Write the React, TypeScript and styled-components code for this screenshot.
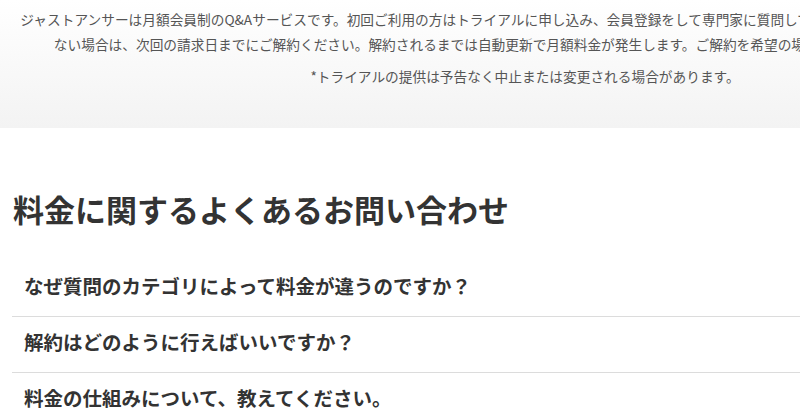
import React from "react";
import styled, { createGlobalStyle } from "styled-components";

const GlobalStyle = createGlobalStyle`
  html, body {
    margin: 0;
    padding: 0;
    background: #fff;
    overflow: hidden;
  }
  body {
    font-family: "Noto Sans CJK JP", "Noto Sans", sans-serif;
    color: #333;
  }
`;

const Page = styled.div`
  width: 1050px;
`;

const Notice = styled.section`
  height: 128px;
  box-sizing: border-box;
  padding-top: 7px;
  background: linear-gradient(#ffffff 0%, #f3f3f3 100%);
  text-align: center;
  color: #555;
  font-size: 13.7px;
`;

const NoticeText = styled.p<{ $gap?: number }>`
  margin: ${(p) => p.$gap ?? 0}px 0 0;
  line-height: 25px;
  white-space: nowrap;
`;

const Faq = styled.section`
  padding-left: 12px;
`;

const Heading = styled.h2`
  margin: 60px 0 31px 1px;
  font-size: 31px;
  line-height: 42px;
  font-weight: 700;
  color: #333;
`;

const List = styled.ul`
  list-style: none;
  margin: 0;
  padding: 0;
`;

const Item = styled.li`
  display: flex;
  align-items: center;
  height: 56px;
  box-sizing: border-box;
  padding: 0 0 7px 12px;
  border-bottom: 1px solid #dcdcdc;
  font-size: 19.5px;
  font-weight: 700;
  color: #333;
`;

const questions = [
  "なぜ質問のカテゴリによって料金が違うのですか？",
  "解約はどのように行えばいいですか？",
  "料金の仕組みについて、教えてください。",
];

export default function App() {
  return (
    <Page>
      <GlobalStyle />
      <Notice>
        <NoticeText>
          ジャストアンサーは月額会員制のQ&amp;Aサービスです。初回ご利用の方はトライアルに申し込み、会員登録をして専門家に質問してください。会員の継続をご希望され
          <br />
          ない場合は、次回の請求日までにご解約ください。解約されるまでは自動更新で月額料金が発生します。ご解約を希望の場合はマイページより手続きを。
        </NoticeText>
        <NoticeText $gap={7}>
          *トライアルの提供は予告なく中止または変更される場合があります。
        </NoticeText>
      </Notice>
      <Faq>
        <Heading>料金に関するよくあるお問い合わせ</Heading>
        <List>
          {questions.map((q) => (
            <Item key={q}>{q}</Item>
          ))}
        </List>
      </Faq>
    </Page>
  );
}
